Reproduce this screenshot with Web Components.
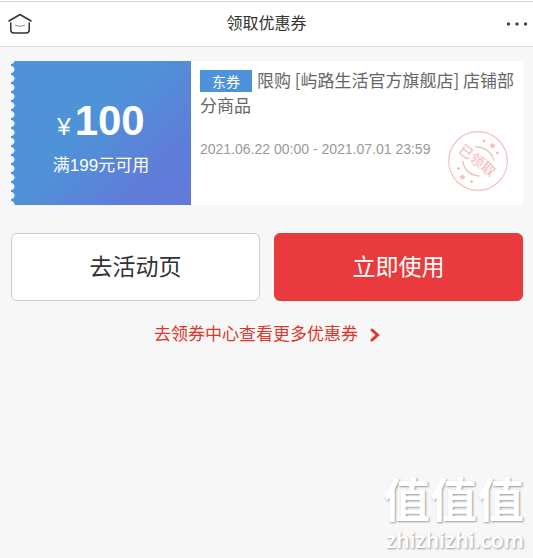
<!DOCTYPE html>
<html lang="zh-CN">
<head>
<meta charset="utf-8">
<meta name="viewport" content="width=device-width, initial-scale=1">
<title>领取优惠券</title>
<style>
    body {
        margin: 0;
        background: #f7f7f7;
        color: #333;
        font-family: "Liberation Sans", "Noto Sans CJK SC", sans-serif;
    }
</style>
</head>
<body>
<coupon-page>
    <page-header slot="header">领取优惠券</page-header>
    <coupon-card amount="100" limit="满199元可用" type="东券" period="2021.06.22 00:00 - 2021.07.01 23:59">限购 [屿路生活官方旗舰店] 店铺部分商品</coupon-card>
    <action-bar>
        <action-button>去活动页</action-button>
        <action-button primary>立即使用</action-button>
    </action-bar>
    <more-link href="#coupons">去领券中心查看更多优惠券</more-link>
    <site-mark slot="mark" name="值值值">zhizhizhi.com</site-mark>
</coupon-page>

<script>
class CouponPage extends HTMLElement {
    constructor() {
        super();
        this.attachShadow({ mode: "open" }).innerHTML = `
        <style>
        :host {
            display: flex;
            flex-direction: column;
            min-height: 100vh;
            box-sizing: border-box;
        }

        main {
            flex: 1;
            display: flex;
            flex-direction: column;
            padding: 14px 10px 0 11px;
        }
        </style>
        <slot name="header"></slot>
        <main><slot></slot></main>
        <slot name="mark"></slot>`;
    }
}

class PageHeader extends HTMLElement {
    constructor() {
        super();
        this.attachShadow({ mode: "open" }).innerHTML = `
        <style>
        :host {
            display: block;
            padding-top: 1px;
            background: #fff;
        }

        header {
            display: grid;
            grid-template-columns: 40px 1fr 40px;
            align-items: center;
            height: 44px;
            border-top: 1px solid #d5d8d8;
            border-bottom: 1px solid #dedede;
        }

        h1 {
            margin: 0;
            font-size: 16px;
            font-weight: 400;
            line-height: 24px;
            text-align: center;
        }

        button {
            display: flex;
            padding: 0;
            border: 0;
            background: none;
            color: #333;
        }

        .home {
            padding-left: 8px;
        }

        .more {
            justify-content: flex-end;
            padding-right: 5px;
        }

        svg {
            display: block;
            fill: none;
            stroke: currentColor;
        }
        </style>
        <header>
            <button class="home" aria-label="首页">
                <svg width="24" height="22" viewBox="0 0 24 22" stroke-width="1.5" stroke-linecap="round" stroke-linejoin="round">
                    <path d="M1 8 12 1.5 23 8M2.800 10v7q0 3 3 3h12.400q3 0 3-3v-7"/>
                    <path d="M7.500 12.500q4.500 1.500 9 0" stroke="#888" stroke-width="1"/>
                </svg>
            </button>
            <h1><slot></slot></h1>
            <button class="more" aria-label="更多">
                <svg width="22" height="6" viewBox="0 0 22 6">
                    <g fill="#444" stroke="none"><circle cx="2.500" cy="3" r="1.700"/><circle cx="11" cy="3" r="1.700"/><circle cx="19.500" cy="3" r="1.700"/></g>
                </svg>
            </button>
        </header>`;
    }
}

class CouponCard extends HTMLElement {
    connectedCallback() {
        const shadow = this.attachShadow({ mode: "open" });
        shadow.innerHTML = `
        <style>
        :host {
            display: block;
        }

        article {
            display: grid;
            grid-template-columns: 180px 1fr;
            min-height: 144px;
            background: #fff;
        }

        .value {
            display: flex;
            flex-direction: column;
            align-items: center;
            justify-content: center;
            gap: 5px;
            padding-top: 11px;
            /* perforated edge over the blue gradient */
            background:
                radial-gradient(circle at 0 50%, #f0f5fa 3px, transparent 4px) 0 4px / 9px 9px repeat-y,
                linear-gradient(135deg, #4e93d7 0%, #4e93d7 42%, #607cd9 80%, #617ad9 100%);
            color: #fff;
        }

        .amount {
            margin: 0;
            font-size: 24px;
            line-height: 44px;
        }

        .amount strong {
            margin-left: 4px;
            font-size: 42px;
        }

        .limit {
            margin: 0;
            font-size: 17px;
            line-height: 24px;
        }

        .info {
            display: flex;
            flex-direction: column;
            padding: 6px 0 14px 9px;
        }

        h2 {
            margin: 0;
            color: #666;
            font-family: "Noto Sans CJK SC", sans-serif;
            font-size: 17px;
            font-weight: 400;
            line-height: 25px;
        }

        .type {
            display: inline-block;
            width: 52px;
            margin-right: 5px;
            background: #4e93d7;
            color: #fff;
            font-size: 14px;
            line-height: 22px;
            text-align: center;
        }

        .status {
            display: flex;
            justify-content: space-between;
            margin-top: auto;
            padding-right: 15px;
        }

        time {
            padding-top: 8px;
            color: #999;
            font-size: 14px;
            line-height: 20px;
            white-space: nowrap;
        }

        .stamp {
            flex: none;
        }
        </style>
        <article>
            <div class="value">
                <p class="amount">¥<strong>${this.getAttribute("amount")}</strong></p>
                <p class="limit">${this.getAttribute("limit")}</p>
            </div>
            <div class="info">
                <h2><span class="type">${this.getAttribute("type")}</span><slot></slot></h2>
                <div class="status">
                    <time>${this.getAttribute("period")}</time>
                    <svg class="stamp" width="60" height="60" viewBox="0 0 60 60" fill="none" stroke="#f5bfc0">
                        <circle cx="30" cy="30" r="29.300" stroke-width="1.200"/>
                        <path d="M27 15.500q15 1 19 14M14.500 30q3 14 17 15" stroke-width="1.400"/>
                        <g fill="#f5bfc0" stroke="none">
                            <circle cx="36" cy="10" r="1.500"/>
                            <path d="m44.500 11.500 1 1.700 2 .2-1.200 1.700.4 2-2-.6-1.700 1-.2-2-1.500-1.400 1.900-.8z"/>
                            <circle cx="49.500" cy="22" r="1.500"/>
                            <circle cx="10.500" cy="37.500" r="1.500"/>
                            <path d="m14.500 43 1 1.700 2 .2-1.200 1.700.4 2-2-.6-1.700 1-.2-2-1.500-1.400 1.900-.8z"/>
                            <circle cx="23.500" cy="50.500" r="1.500"/>
                            <text transform="rotate(38 30 30)" x="29" y="35" text-anchor="middle" font-size="14" font-weight="500">已领取</text>
                        </g>
                    </svg>
                </div>
            </div>
        </article>`;
    }
}

class ActionBar extends HTMLElement {
    constructor() {
        super();
        this.attachShadow({ mode: "open" }).innerHTML = `
        <style>
        :host {
            display: grid;
            grid-template-columns: 1fr 1fr;
            gap: 14px;
            margin-top: 28px;
        }
        </style>
        <slot></slot>`;
    }
}

class ActionButton extends HTMLElement {
    constructor() {
        super();
        this.attachShadow({ mode: "open" }).innerHTML = `
        <style>
        :host {
            display: block;
        }

        button {
            display: block;
            width: 100%;
            padding: 16px 0;
            border: 1px solid #ccc;
            border-radius: 6px;
            background: #fff;
            color: #333;
            font: inherit;
            font-size: 23px;
            line-height: 34px;
        }

        :host([primary]) button {
            border-color: #e93b3d;
            background: #e93b3d;
            color: #fff;
        }
        </style>
        <button type="button"><slot></slot></button>`;
    }
}

class MoreLink extends HTMLElement {
    connectedCallback() {
        this.attachShadow({ mode: "open" }).innerHTML = `
        <style>
        :host {
            display: flex;
            justify-content: center;
            margin-top: 21px;
        }

        a {
            display: flex;
            align-items: center;
            gap: 12px;
            color: #e2352a;
            font-size: 17px;
            line-height: 26px;
            text-decoration: none;
        }
        </style>
        <a href="${this.getAttribute("href")}"><slot></slot>
            <svg width="10" height="14" viewBox="0 0 10 14" fill="none" stroke="currentColor" stroke-width="3" stroke-linecap="round">
                <path d="m2 2 5.500 5L2 12"/>
            </svg>
        </a>`;
    }
}

class SiteMark extends HTMLElement {
    connectedCallback() {
        this.attachShadow({ mode: "open" }).innerHTML = `
        <style>
        :host {
            display: flex;
            flex-direction: column;
            align-items: flex-end;
            padding: 0 9px 4px 0;
            color: #fff;
            text-shadow: 1px 1px 2px #999;
        }

        b {
            font-size: 47px;
            line-height: 50px;
        }

        span {
            font-family: "Noto Sans", sans-serif;
            font-size: 21px;
            font-weight: 600;
            line-height: 28px;
        }
        </style>
        <b>${this.getAttribute("name")}</b>
        <span><slot></slot></span>`;
    }
}

customElements.define("coupon-page", CouponPage);
customElements.define("page-header", PageHeader);
customElements.define("coupon-card", CouponCard);
customElements.define("action-bar", ActionBar);
customElements.define("action-button", ActionButton);
customElements.define("more-link", MoreLink);
customElements.define("site-mark", SiteMark);
</script>
</body>
</html>
